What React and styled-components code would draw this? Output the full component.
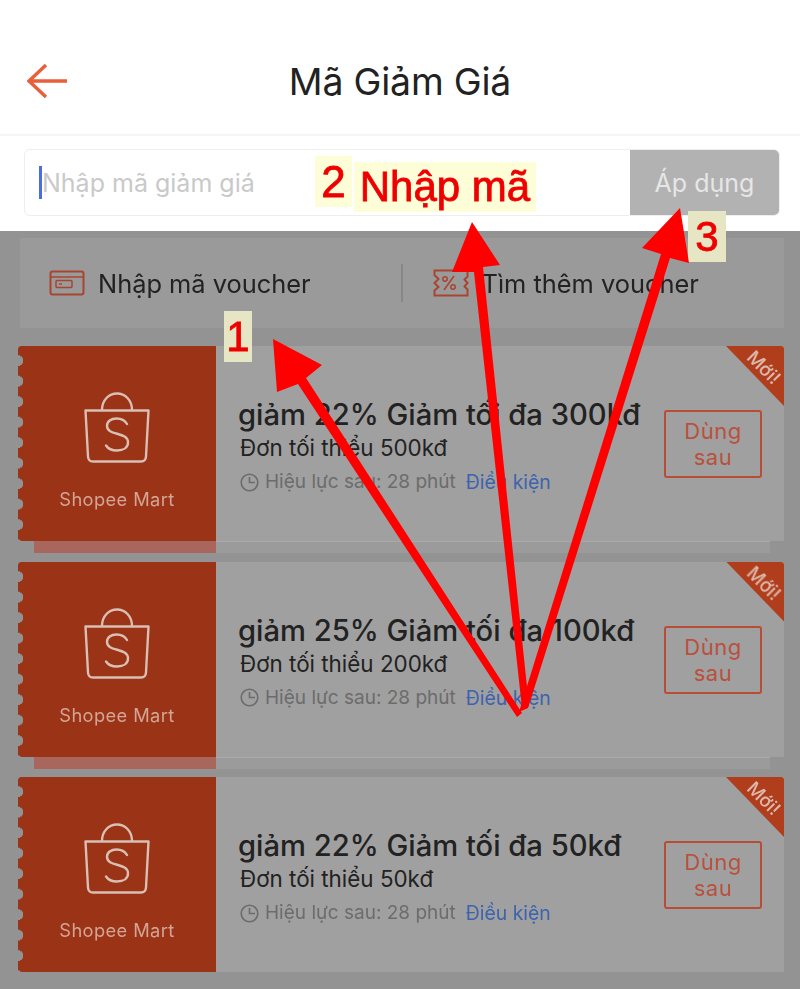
import React from "react";
import styled, { createGlobalStyle } from "styled-components";

const Global = createGlobalStyle`
  html, body { margin: 0; padding: 0; background: #939393; }
  * { box-sizing: border-box; }
`;

const Screen = styled.div`
  position: relative;
  width: 800px;
  height: 989px;
  overflow: hidden;
  background: #939393;
  font-family: Inter, "Liberation Sans", sans-serif;
`;
const Blurred = styled.div`
  filter: blur(0.7px);
`;
const Header = styled.header`
  height: 134px;
  padding: 28px 27px 0;
  background: #fff;
  display: grid;
  grid-template-columns: 1fr auto 1fr;
  align-items: center;
`;
const Title = styled.h1`
  margin: 0;
  font-size: 37.4px;
  font-weight: 400;
  color: #222;
  letter-spacing: -0.2px;
`;
const CodeBar = styled.div`
  height: 97px;
  padding: 15px 20px 15px 24px;
  background: #fff;
  border-top: 2px solid #f5f5f5;
`;
const CodeBox = styled.div`
  display: flex;
  height: 67px;
  margin-top: -2px;
  border: 1px solid #eee;
  border-radius: 6px;
  overflow: hidden;
`;
const CodeInput = styled.div`
  flex: 1;
  display: flex;
  align-items: center;
  padding-left: 14px;
  font-size: 25px;
  color: #c9c9c9;
`;
const Caret = styled.span`
  width: 3px;
  height: 33px;
  background: #4a6ee0;
`;
const ApplyButton = styled.div`
  width: 149px;
  display: flex;
  align-items: center;
  justify-content: center;
  background: #b2b2b2;
  color: #e6e6e6;
  font-size: 25px;
`;
const Dimmed = styled.main`
  padding: 7px 16px 0 18px;
`;
const VoucherRow = styled.div`
  height: 90px;
  margin: 0 0 18px 2px;
  display: flex;
  align-items: center;
  background: #9a9a9a;
  color: #222;
  font-size: 25.4px;
`;
const VoucherCell = styled.div`
  flex: 1;
  height: 38px;
  display: flex;
  align-items: center;
  gap: ${(p) => p.$gap}px;
  padding-left: ${(p) => p.$pad}px;
  & + & { border-left: 2px solid #888; }
`;
const TicketWrap = styled.article`
  margin-bottom: ${(p) => (p.$strip ? "8.5px" : "0")};
`;
const Ticket = styled.div`
  position: relative;
  height: 195px;
  display: flex;
`;
const Stub = styled.div`
  width: 198px;
  flex: none;
  display: flex;
  flex-direction: column;
  align-items: center;
  padding-top: 46px;
  background: #9b3316;
  border-radius: 3px 0 0 3px;
  -webkit-mask: radial-gradient(circle 5.5px at 0 50%, transparent 94%, #000) 0 4.4px / 100% 20.5px;
  mask: radial-gradient(circle 5.5px at 0 50%, transparent 94%, #000) 0 4.4px / 100% 20.5px;
`;
const StubLabel = styled.div`
  margin-top: 24px;
  font-size: 18.3px;
  line-height: 22px;
  letter-spacing: 0.4px;
  color: #d3a596;
`;
const Details = styled.div`
  flex: 1;
  padding: 53px 0 0 22px;
  background: #a0a0a0;
  color: #222;
`;
const Headline = styled.div`
  font-size: 29.2px;
  font-weight: 500;
  line-height: 32px;
  white-space: nowrap;
`;
const Minimum = styled.div`
  margin: 3px 0 0 2px;
  font-size: 22.4px;
  line-height: 27px;
  white-space: nowrap;
`;
const Validity = styled.div`
  display: flex;
  align-items: center;
  gap: 6px;
  margin: 10px 0 0 2px;
  font-size: 19px;
  line-height: 22px;
  color: #6c6c6c;
  white-space: nowrap;
`;
const Terms = styled.span`
  margin-left: 4px;
  font-size: 19.4px;
  color: #3d63ad;
`;
const LaterButton = styled.div`
  position: absolute;
  right: 22px;
  top: 64px;
  width: 98px;
  height: 68px;
  display: flex;
  align-items: center;
  justify-content: center;
  text-align: center;
  border: 2px solid #b94c35;
  border-radius: 3px;
  color: #b9503d;
  font-size: 22px;
  line-height: 26px;
  letter-spacing: 0.5px;
`;
const Ribbon = styled.div`
  position: absolute;
  top: 0;
  right: 0;
  width: 58px;
  height: 60px;
  background: #b03e1c;
  border-top-right-radius: 3px;
  clip-path: polygon(0 0, 100% 0, 100% 100%);
`;
const RibbonText = styled.span`
  position: absolute;
  top: 10px;
  right: 1px;
  font-size: 18.5px;
  font-weight: 500;
  color: #dcb9ac;
  transform: rotate(45deg);
`;
const StripRow = styled.div`
  height: 12px;
  display: flex;
  padding: 0 14px 0 16px;
`;
const StripLeft = styled.div`
  width: 182px;
  background: #a9665c;
`;
const StripRight = styled.div`
  flex: 1;
  background: #9b9b9b;
  border-top: 1px solid #a9a9a9;
`;
const ArrowLayer = styled.svg`
  position: absolute;
  inset: 0;
  width: 800px;
  height: 989px;
  filter: blur(0.4px);
`;
const Tag = styled.div`
  position: absolute;
  left: ${(p) => p.$x}px;
  top: ${(p) => p.$y}px;
  width: ${(p) => p.$w}px;
  height: ${(p) => p.$h}px;
  display: flex;
  align-items: center;
  justify-content: center;
  background: ${(p) => p.$bg};
  color: #ee0000;
  font-family: "Liberation Sans", Arial, sans-serif;
  font-size: ${(p) => p.$size}px;
  font-weight: 500;
  white-space: nowrap;
  -webkit-text-stroke: 0.8px #ee0000;
  filter: blur(0.5px);
`;

const BackIcon = () => (
  <svg width="40" height="36" viewBox="0 0 40 36" fill="none" stroke="#e85f3a" strokeWidth="3.400">
    <path d="M19 2 2 18l17 16M2 18h38" />
  </svg>
);
const CardIcon = () => (
  <svg width="36" height="26" viewBox="0 0 36 26" fill="none" stroke="#a8442f" strokeWidth="2">
    <rect x="1.500" y="1.500" width="33" height="23" rx="2" />
    <path d="M2 7h32" strokeWidth="1.500" />
    <rect x="7" y="10.500" width="16" height="7" rx="1" strokeWidth="1.500" />
    <path d="M10 14h3" strokeWidth="1.500" />
  </svg>
);
const PercentIcon = () => (
  <svg width="36" height="28" viewBox="0 0 36 28" fill="none" stroke="#a8442f" strokeWidth="2">
    <path d="M1.500 1.500h33v6l-3 3 3 3.500-3 3.500 3 3v6h-33v-5l4-3.500-4-4 4-4-4-4z" />
    <path d="M11 21 21 7" strokeWidth="1.500" />
    <circle cx="12" cy="10" r="2.200" strokeWidth="1.500" />
    <circle cx="20" cy="18" r="2.200" strokeWidth="1.500" />
  </svg>
);
const BagIcon = () => (
  <svg width="66" height="72" viewBox="0 0 66 72" fill="none" stroke="#d9bfb4" strokeWidth="2.400" strokeLinecap="round" strokeLinejoin="round">
    <path d="M1.500 18.500h63l-2.500 46c-.2 3.500-2 5-5 5H9c-3 0-4.800-1.500-5-5z" />
    <path d="M18 18c0-10 7-16.500 15-16.500S48 8 48 18" />
    <path d="M43 32c-2-3.500-6-5.500-10.500-5.500-5.500 0-9.500 3-9.500 7.500 0 10 21 5.500 21 16.500 0 5-4.500 8-11 8-5 0-9-2-11-5" />
  </svg>
);
const ClockIcon = () => (
  <svg width="19" height="19" viewBox="0 0 19 19" fill="none" stroke="#6c6c6c" strokeWidth="1.600">
    <circle cx="9.500" cy="9.500" r="8.300" />
    <path d="M9.500 4v5.500H15" />
  </svg>
);

const vouchers = [
  { title: "giảm 22% Giảm tối đa 300kđ", min: "Đơn tối thiểu 500kđ", strip: true },
  { title: "giảm 25% Giảm tối đa 100kđ", min: "Đơn tối thiểu 200kđ", strip: true },
  { title: "giảm 22% Giảm tối đa 50kđ", min: "Đơn tối thiểu 50kđ", strip: false },
];

export default function App() {
  return (
    <Screen>
      <Global />
      <Blurred>
        <Header>
          <BackIcon />
          <Title>Mã Giảm Giá</Title>
        </Header>
        <CodeBar>
          <CodeBox>
            <CodeInput>
              <Caret />
              Nhập mã giảm giá
            </CodeInput>
            <ApplyButton>Áp dụng</ApplyButton>
          </CodeBox>
        </CodeBar>
        <Dimmed>
          <VoucherRow>
            <VoucherCell $gap={13} $pad={29}>
              <CardIcon />
              Nhập mã voucher
            </VoucherCell>
            <VoucherCell $gap={13} $pad={30}>
              <PercentIcon />
              Tìm thêm voucher
            </VoucherCell>
          </VoucherRow>
          {vouchers.map((v) => (
            <TicketWrap key={v.title} $strip={v.strip}>
              <Ticket>
                <Stub>
                  <BagIcon />
                  <StubLabel>Shopee Mart</StubLabel>
                </Stub>
                <Details>
                  <Headline>{v.title}</Headline>
                  <Minimum>{v.min}</Minimum>
                  <Validity>
                    <ClockIcon />
                    Hiệu lực sau: 28 phút
                    <Terms>Điều kiện</Terms>
                  </Validity>
                </Details>
                <LaterButton>Dùng sau</LaterButton>
                <Ribbon>
                  <RibbonText>Mới!</RibbonText>
                </Ribbon>
              </Ticket>
              {v.strip && (
                <StripRow>
                  <StripLeft />
                  <StripRight />
                </StripRow>
              )}
            </TicketWrap>
          ))}
        </Dimmed>
      </Blurred>
      <Tag $x={224} $y={311} $w={28} $h={51} $bg="#e6e6c4" $size={42}>1</Tag>
      <Tag $x={315} $y={156} $w={37} $h={51} $bg="#fdfdd8" $size={44}>2</Tag>
      <Tag $x={354} $y={162} $w={182} $h={50} $bg="#fdfdd8" $size={42}>Nhập mã</Tag>
      <Tag $x={688} $y={211} $w={38} $h={51} $bg="#e6e6c4" $size={42}>3</Tag>
      <ArrowLayer viewBox="0 0 800 989">
        <g fill="#fe0000">
          <path d="M273 339 322 365 306 378 522 713 517 717 298 384 277 392z" />
          <path d="M472 222 500 265 483 267 529 706 522 708 474 272 452 272z" />
          <path d="M680 208 689 263 670 258 528 708 519 712 661 254 642 248z" />
        </g>
      </ArrowLayer>
    </Screen>
  );
}
